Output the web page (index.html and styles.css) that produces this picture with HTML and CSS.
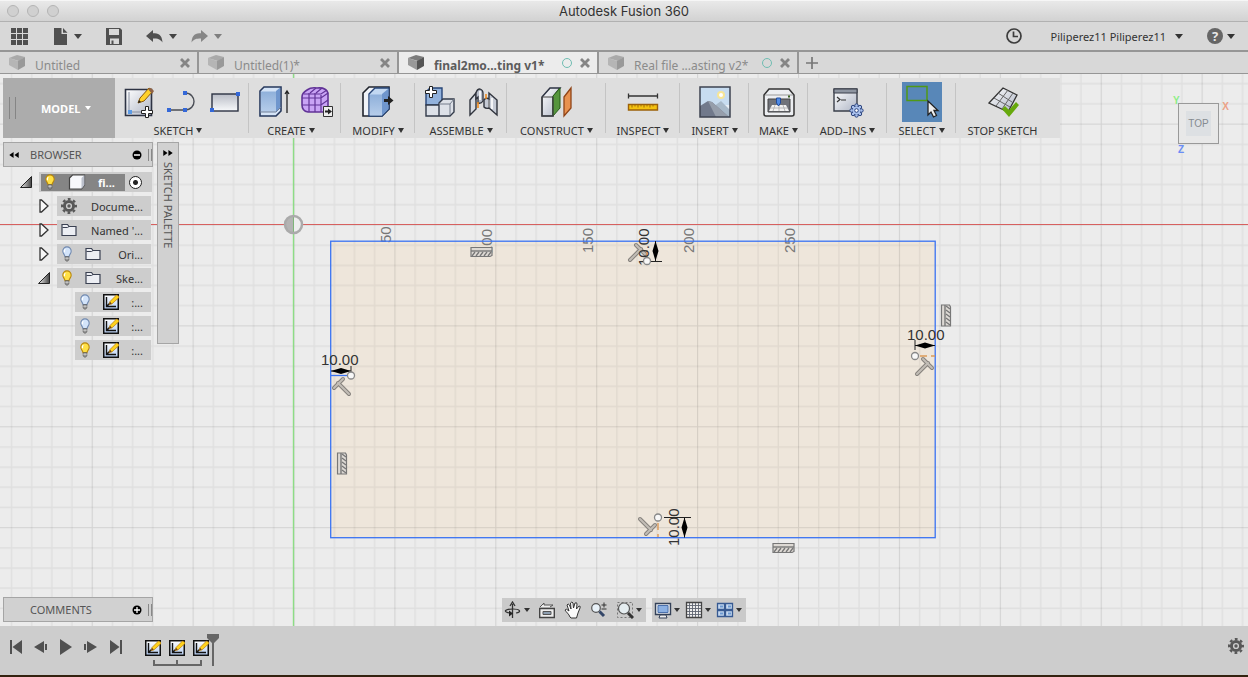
FILE: index.html
```html
<!DOCTYPE html>
<html lang="en">
<head>
  <meta charset="UTF-8" />
  <meta name="viewport" content="width=device-width, initial-scale=1.0"/>
  <title>Autodesk Fusion 360</title>
  <link rel="stylesheet" href="styles.css">
</head>
<body>
  <svg class="defs" aria-hidden="true">
    <defs>
      <linearGradient id="metal" x1="0" y1="0" x2="0" y2="1"><stop offset="0" stop-color="#b9bdc6"/><stop offset="1" stop-color="#f8f9fb"/></linearGradient>
      <linearGradient id="paper" x1="0" y1="0" x2="1" y2="1"><stop offset="0" stop-color="#fff"/><stop offset="1" stop-color="#aeb5c5"/></linearGradient>
      <linearGradient id="blue" x1="0" y1="0" x2="0" y2="1"><stop offset="0" stop-color="#8fb0da"/><stop offset="1" stop-color="#b6cdea"/></linearGradient>
      <linearGradient id="sheet" x1="0" y1="0" x2="0" y2="1"><stop offset="0" stop-color="#fff"/><stop offset="1" stop-color="#b5cdf2"/></linearGradient>
      <linearGradient id="fold" x1="0" y1="0" x2="1" y2="0"><stop offset="0" stop-color="#eee"/><stop offset="1" stop-color="#444"/></linearGradient>
    </defs>
    <symbol id="i-cube" viewBox="0 0 18 18">
      <path d="M1 4 9 1l8 2-6 4z" opacity=".75"/><path d="M1 4l9 3v9l-9-5z" opacity=".55"/><path d="M10 7l7-4v9l-7 4z"/>
    </symbol>
    <symbol id="i-close" viewBox="0 0 10 10"><path d="M1 1l8 8M9 1L1 9" stroke="#858585" stroke-width="2.8"/></symbol>
    <symbol id="i-bulb" viewBox="0 0 12 18">
      <path d="M6 1a4.700 4.700 0 0 0-4.700 4.800C1.300 8.500 3.500 9.500 3.700 12h4.600c.2-2.500 2.400-3.500 2.400-6.200A4.700 4.700 0 0 0 6 1z" stroke-width="1.200"/>
      <path d="M4 3.500q-1.500 1.500-.8 3.500" fill="none" stroke="#fff" stroke-width="1.400"/>
      <path d="M4 12h4v3.500L6.800 17H5.200L4 15.500z" fill="#999" stroke="#555" stroke-width=".8"/><path d="M4 13.700h4" stroke="#eee" stroke-width=".8"/>
    </symbol>
    <symbol id="i-folder" viewBox="0 0 16 14">
      <path d="M1 12.500V1.500h5.500l1.500 2h7v9z" fill="#eceef3" stroke="#3b4152" stroke-width="1.200"/><path d="M1.500 4.500h5L8 3.500" fill="none" stroke="#3b4152"/>
    </symbol>
    <symbol id="i-sketch" viewBox="0 0 16 16">
      <rect x=".75" y=".75" width="14.500" height="14.500" fill="url(#sheet)" stroke="#111" stroke-width="1.500"/>
      <path d="M3.500 3v9.500H13M3.500 12.500l3-3" fill="none" stroke="#111" stroke-width="1.400"/>
      <path d="M6 10.500l1-3L13.500 1 16 2.500v1L8.800 10z" fill="#ffd21c" stroke="#b57708" stroke-width=".7"/><path d="M6 10.500l1-2.800 1.800 2z" fill="#6a421d"/>
    </symbol>
    <symbol id="i-gear" viewBox="0 0 16 16">
      <circle cx="8" cy="8" r="4.600" fill="none" stroke="#585858" stroke-width="3"/>
      <circle cx="8" cy="8" r="6.900" fill="none" stroke="#585858" stroke-width="2.200" stroke-dasharray="2.800 2.620" stroke-dashoffset="1.400"/>
      <circle cx="8" cy="8" r="1.700" fill="#585858"/>
    </symbol>
    <symbol id="i-closed" viewBox="0 0 10 14"><path d="M1 1h1.500L9 7l-6.500 6H1z" fill="#f7f7f7" stroke="#333" stroke-width="1.300"/></symbol>
    <symbol id="i-open" viewBox="0 0 12 12"><path d="M11.500.5v11H.5z" fill="url(#fold)" stroke="#222"/></symbol>
    <symbol id="i-perp" viewBox="-12 -12 24 24">
      <g fill="none" stroke-linecap="round"><path d="M-7 7L4-4M-1-8L8 1" stroke="#85817c" stroke-width="4"/><path d="M-7 7L4-4M-1-8L8 1" stroke="#c2bdb6" stroke-width="2"/></g>
    </symbol>
    <symbol id="i-level" viewBox="0 0 24 12">
      <path d="M1 1.500h21v8l-2 1H1z" fill="#ddd9d4" stroke="#777" stroke-width="1.200"/><path d="M1 5h21" stroke="#777" stroke-width="1.400"/>
      <path d="M2 10l3-4M6 10l3-4M10 10l3-4M14 10l3-4M18 10l3-4" stroke="#777" stroke-width="1.300"/>
    </symbol>
  </svg>

  <header class="titlebar">
    <div class="lights"><button aria-label="Close window"></button><button aria-label="Minimize"></button><button aria-label="Zoom"></button></div>
    <h1>Autodesk Fusion 360</h1>
  </header>

  <div class="appbar">
    <div class="quick">
      <button class="quick-grid" aria-label="Data panel"><svg width="17" height="17" viewBox="0 0 17 17"><path d="M0 0h5v5H0zM6 0h5v5H6zM12 0h5v5h-5zM0 6h5v5H0zM6 6h5v5H6zM12 6h5v5h-5zM0 12h5v5H0zM6 12h5v5H6zM12 12h5v5h-5z"/></svg></button>
      <button class="quick-file" aria-label="File"><svg width="14" height="17" viewBox="0 0 14 17"><path d="M0 0h7.500v6H13v11H0zM9 0l4.500 4.800H9z"/></svg><span class="caret"></span></button>
      <button class="quick-save" aria-label="Save"><svg width="16" height="17" viewBox="0 0 16 17"><path d="M0 0h14l2 2v15H0zM3 1v6h10V1zM4 10.500V16h9v-5.500z" fill-rule="evenodd"/><path d="M5.500 12.500h2V16h-2z"/></svg></button>
      <button class="quick-undo" aria-label="Undo"><svg width="17" height="13" viewBox="0 0 17 13"><path d="M0 6l7-6v3.300c5 0 9 1 9.500 9.200C14 9 12 8.500 7 8.500V12z"/></svg><span class="caret"></span></button>
      <button class="quick-redo" aria-label="Redo"><svg width="17" height="13" viewBox="0 0 17 13"><path d="M17 6l-7-6v3.300C5 3.300 1 4.300.5 12.500 3 9 5 8.500 10 8.500V12z"/></svg><span class="caret"></span></button>
    </div>
    <div class="account">
      <button aria-label="Job status"><svg width="16" height="16" viewBox="0 0 16 16"><circle cx="8" cy="8" r="7" fill="none" stroke="#3d3d3d" stroke-width="1.700"/><path d="M7.500 3.500V8.500H12" fill="none" stroke="#3d3d3d" stroke-width="1.700"/></svg></button>
      <button class="user">Piliperez11 Piliperez11<span class="caret"></span></button>
      <button aria-label="Help"><span class="help">?</span><span class="caret"></span></button>
    </div>
  </div>

  <nav class="tabs">
    <div class="tab"><svg class="cube"><use href="#i-cube"/></svg><a href="#untitled">Untitled</a><button aria-label="Close tab"><svg width="10" height="10"><use href="#i-close"/></svg></button></div>
    <div class="tab"><svg class="cube"><use href="#i-cube"/></svg><a href="#untitled1">Untitled(1)*</a><button aria-label="Close tab"><svg width="10" height="10"><use href="#i-close"/></svg></button></div>
    <div class="tab active"><svg class="cube"><use href="#i-cube"/></svg><a href="#final">final2mo...ting v1*</a><span class="sync"></span><button aria-label="Close tab"><svg width="10" height="10"><use href="#i-close"/></svg></button></div>
    <div class="tab"><svg class="cube"><use href="#i-cube"/></svg><a href="#real">Real file ...asting v2*</a><span class="sync"></span><button aria-label="Close tab"><svg width="10" height="10"><use href="#i-close"/></svg></button></div>
    <button class="new-tab" aria-label="New tab"><svg width="12" height="12" viewBox="0 0 12 12"><path d="M6 0v12M0 6h12" stroke="#777" stroke-width="1.700"/></svg></button>
  </nav>

  <main class="viewport">
    <svg class="drawing" role="img" aria-label="Sketch plane">
      <defs>
        <pattern id="grid" x="293.500" y="150.500" width="100.900" height="100.900" patternUnits="userSpaceOnUse">
          <path d="M20.700 0v101M40.900 0v101M61 0v101M81.200 0v101M0 20.700h101M0 40.900h101M0 61h101M0 81.200h101" stroke="#000" stroke-opacity=".055" stroke-width="1.400"/>
          <path d="M.5 0v101M0 .5h101" stroke="#000" stroke-opacity=".11" stroke-width="1.100"/>
        </pattern>
      </defs>
      <rect x="331" y="167" width="604" height="297" fill="#eee6db"/>
      <rect width="100%" height="100%" fill="url(#grid)"/>
      <!-- axes and origin -->
      <path d="M0 150.500h4000" stroke="#d7605f"/>
      <path d="M293.500 0v2000" stroke="#8ddd85" stroke-width="1.400"/>
      <circle cx="293.500" cy="150.500" r="8.500" fill="#eee"/>
      <path d="M293.500 150.500v-8.500a8.500 8.500 0 0 0-8.500 8.500zM293.500 150.500h-8.500a8.500 8.500 0 0 0 8.500 8.500z" fill="#b4b4b4"/>
      <path d="M293.500 142v17" stroke="#7fb579"/>
      <circle cx="293.500" cy="150.500" r="8.500" fill="none" stroke="#aaa" stroke-width="2.500"/>
      <g class="ruler">
        <text transform="translate(391 169) rotate(-90)">50</text>
        <text transform="translate(492 180) rotate(-90)">100</text>
        <text transform="translate(593 179) rotate(-90)">150</text>
        <text transform="translate(694 179) rotate(-90)">200</text>
        <text transform="translate(795 179) rotate(-90)">250</text>
      </g>
      <rect x="330.700" y="167.200" width="604.500" height="296.500" fill="none" stroke="#3a73f2" stroke-width="1.300"/>
      <!-- constraint glyphs -->
      <use href="#i-level" x="470" y="172" width="24" height="12"/>
      <use href="#i-level" x="772" y="468" width="24" height="12"/>
      <use href="#i-level" width="24" height="12" transform="translate(940 253) rotate(-90)"/>
      <use href="#i-level" width="24" height="12" transform="translate(336 401) rotate(-90)"/>
      <use href="#i-perp" x="625" y="167" width="24" height="24"/>
      <use href="#i-perp" x="912" y="281" width="24" height="24"/>
      <use href="#i-perp" width="24" height="24" transform="translate(342 313) rotate(-90) translate(-12 -12)"/>
      <use href="#i-perp" width="24" height="24" transform="translate(647 452) rotate(90) translate(-12 -12)"/>
      <!-- dimensions -->
      <path d="M658 449v14M920 282h15M647 176v12" stroke="#dc9a58" stroke-width="1.400" stroke-dasharray="7 4" fill="none"/>
      <path d="M331 301.500h16" stroke="#3a73f2" stroke-width="1.300"/>
      <g class="dimension">
        <path d="M331 297h20M351 292v10M915 271.500h20M915 266v10M655.500 167v20M649 187.500h13M684.500 443.500v20M664 443.500h27"/>
        <path class="tip" d="M331 297l10-3 10 3-10 3zM915 271.500l10-3 10 3-10 3zM655.500 167l3 10-3 10-3-10zM684.500 443.500l3 10-3 10-3-10z"/>
        <text x="321" y="291">10.00</text>
        <text x="907" y="266">10.00</text>
        <text transform="translate(649 192) rotate(-90)">10.00</text>
        <text transform="translate(679 472) rotate(-90)">10.00</text>
      </g>
      <g fill="#f8f8f8" stroke="#888" stroke-width="1.300"><circle cx="351" cy="301.500" r="3.500"/><circle cx="915" cy="282" r="3.500"/><circle cx="647" cy="187" r="3.500"/><circle cx="658" cy="443.500" r="3.500"/></g>
    </svg>

    <div class="ribbon">
      <button class="workspace">MODEL<span class="caret"></span></button>
      <section class="group wide">
        <div class="tools">
          <button aria-label="Create sketch"><svg viewBox="0 0 32 32"><path d="M2.500 3.500h26v26h-26z" fill="url(#paper)" stroke="#2d3343" stroke-width="1.600"/><path d="M6 6v20h15" fill="none" stroke="#8990a0"/><path d="M15 17l2-5L26 2l4 3-9 10z" fill="#ffd12b" stroke="#8a5a10"/><path d="M25 3l3-1 3 3-2 3z" fill="#8f6245"/><path d="M15 17l1-3 2 2z" fill="#222"/><path d="M5 24h4v4H5z" fill="#5c9be6"/><path d="M22.500 20.500h3v4h4v3h-4v4h-3v-4h-4v-3h4z" fill="#fff" stroke="#222"/></svg></button>
          <button aria-label="Line"><svg viewBox="0 0 32 32"><path d="M3 24h16c12 0 12-17 0-17" fill="none" stroke="#4a4d55" stroke-width="1.400"/><path d="M1 22h4v4H1zM17 22h4v4h-4zM17 5h4v4h-4z" fill="#3468d8"/></svg></button>
          <button aria-label="Rectangle"><svg viewBox="0 0 32 32"><rect x="3" y="8" width="26" height="17" fill="url(#metal)" stroke="#2d3343" stroke-width="1.400"/><path d="M1 22h4v4H1zM27 6h4v4h-4z" fill="#3468d8"/></svg></button>
        </div>
        <button class="label">SKETCH<span class="caret"></span></button>
      </section>
      <section class="group wide">
        <div class="tools">
          <button aria-label="Extrude"><svg viewBox="0 0 32 32"><path d="M2 5l4-4h17v24l-5 5H2z" fill="#d5e4f7" stroke="#26385c" stroke-width="1.600"/><path d="M2.800 5.500H18V26H2.800z" fill="url(#blue)"/><path d="M18 5l4.200-3.500v20L18 26z" fill="#6f96cd"/><path d="M2 26h16l5-5" fill="none" stroke="#728097"/><path d="M29 27V5m-2 3l2-3 2 3" fill="none" stroke="#222" stroke-width="1.300"/></svg></button>
          <button aria-label="Create form"><svg viewBox="0 0 32 32"><path d="M1 11Q1 7 6 4q4-3 10-2 9-1 11 5v14q-1 4-5 5H7q-6-1-6-7z" fill="#c9a4f5" stroke="#613397" stroke-width="1.600"/><path d="M1 12h19l7-5M1 19h19l7-5M8 7v19M14 7v19M20 9v17M3 8h17l6-4M9 7l6-5M15 7l6-5" fill="none" stroke="#613397" stroke-width="1.200"/><path d="M22.500 20.500h9v10h-9z" fill="#eee" stroke="#333"/><path d="M24 24.500h3v-2l4 3-4 3v-2h-3z" fill="#222"/></svg></button>
        </div>
        <button class="label">CREATE<span class="caret"></span></button>
      </section>
      <section class="group">
        <div class="tools">
          <button aria-label="Press pull"><svg viewBox="0 0 32 32"><path d="M1 7l6-6h20v22l-7 7H1z" fill="#f0f3f8" stroke="#20242c" stroke-width="1.600"/><path d="M7 8l6-6h14v21l-7 7H7z" fill="#c2d8f2" stroke="#274577" stroke-width="1.400"/><path d="M7.700 8.500H20v21H7.700z" fill="url(#blue)"/><path d="M20 8l6.300-5.200V23L20 29.500z" fill="#6f96cd"/><path d="M22 13h4v-3l5.500 4.500L26 19v-3h-4z" fill="#222"/></svg></button>
        </div>
        <button class="label">MODIFY<span class="caret"></span></button>
      </section>
      <section class="group">
        <div class="tools">
          <button aria-label="New component"><svg viewBox="0 0 32 32"><path d="M2 6l4-4h12v14l-3 3H2z" fill="#92b2dc" stroke="#274577" stroke-width="1.400"/><path d="M2 19h13v11H2zM15 17l4-4h11v13l-4 4H15z" fill="#dde1e8" stroke="#333b4a" stroke-width="1.400"/><path d="M15 18h11v11M26 18l4-5" fill="none" stroke="#747d8b"/><path d="M5.500.5h3v4h4v3h-4v4h-3v-4h-4v-3h4z" fill="#fff" stroke="#222"/></svg></button>
          <button aria-label="Joint"><svg viewBox="0 0 32 32"><path d="M3 14l6-7v16l-6 6z" fill="#d7dbe2" stroke="#30343d" stroke-width="1.400"/><path d="M9 7q1-4 4-4 3 1 3 4v8q-2 3-5 2v-6l-2 2z" fill="#b7bdc9" stroke="#30343d" stroke-width="1.300"/><path d="M17 14q2-3 5-1V7l8 7v15l-8-7q-3 1-5-1z" fill="#c5cad4" stroke="#30343d" stroke-width="1.400"/><path d="M13 5v9M25 12v11" stroke="#f4f5f7" stroke-width="2"/><path d="M22 13v9" stroke="#555"/><path d="M11 16v6M19 8v5" stroke="#f18816" stroke-width="1.500"/></svg></button>
        </div>
        <button class="label">ASSEMBLE<span class="caret"></span></button>
      </section>
      <section class="group">
        <div class="tools">
          <button aria-label="Offset plane"><svg viewBox="0 0 32 32"><path d="M1 11L9 2h10l-7 9v19H1z" fill="url(#paper)" stroke="#2d3343" stroke-width="1.500"/><path d="M12 10l7-8v20l-7 8z" fill="#55953d" stroke="#275d18"/><path d="M1 11h11M1 11v19h11V11" fill="none" stroke="#444" stroke-width="1.200"/><path d="M23 11l7-9v20l-7 8z" fill="#e89250" stroke="#904417" stroke-width="1.300"/></svg></button>
        </div>
        <button class="label">CONSTRUCT<span class="caret"></span></button>
      </section>
      <section class="group">
        <div class="tools">
          <button aria-label="Measure"><svg viewBox="0 0 32 32"><path d="M1.500 10h29M1.500 7.500v5M30.500 7.500v5" fill="none" stroke="#333" stroke-width="1.300"/><path d="M1.500 18.500h29V24h-29z" fill="#f4c20f" stroke="#9c610a" stroke-width="1.400"/><path d="M5 19v2.500M8 19v1.500M11 19v2.500M14 19v1.500M17 19v2.500M20 19v1.500M23 19v2.500M26 19v1.500" stroke="#a06c08"/></svg></button>
        </div>
        <button class="label">INSPECT<span class="caret"></span></button>
      </section>
      <section class="group">
        <div class="tools">
          <button aria-label="Insert image"><svg viewBox="0 0 32 32"><path d="M1 1h30v30H1z" fill="#c7dcf0"/><path d="M1 19h30v12H1z" fill="#e8eff6"/><circle cx="22" cy="9" r="3" fill="#fff" stroke="#f7e596" stroke-width="2"/><path d="M14 21l8-6 9 9v7H15z" fill="#a7b8c8"/><path d="M1 20l8-5 4 1 17 15H1z" fill="#71798b"/><path d="M9 15l4 1 17 15H17z" fill="#969eab"/><path d="M1 1h30v30H1z" fill="none" stroke="#3e4350" stroke-width="1.500"/></svg></button>
        </div>
        <button class="label">INSERT<span class="caret"></span></button>
      </section>
      <section class="group">
        <div class="tools">
          <button aria-label="3D print"><svg viewBox="0 0 32 32"><path d="M1 9l5-6h20l5 6v19q0 2-2 2H3q-2 0-2-2z" fill="#eceef1" stroke="#333" stroke-width="1.500"/><path d="M2 9h28" stroke="#999"/><path d="M5 13h22v13H5z" fill="#70737a" stroke="#444"/><path d="M9 19h14l3 6H6z" fill="#f2f2f2"/><path d="M7 22h18M12 19l-2 6M16 19v6M20 19l2 6" stroke="#aaa" stroke-width=".8"/><path d="M13.500 12h4v5l-2 3-2-3z" fill="#4e8ae4" stroke="#224c9c"/><path d="M25 9.500h2v2h-2z" fill="#395e22"/></svg></button>
        </div>
        <button class="label">MAKE<span class="caret"></span></button>
      </section>
      <section class="group">
        <div class="tools">
          <button aria-label="Scripts and add-ins"><svg viewBox="0 0 32 32"><path d="M2 3h23v22H2z" fill="url(#paper)" stroke="#3a3f4a" stroke-width="1.400"/><path d="M2 3h23v4H2z" fill="#8e95a1" stroke="#3a3f4a"/><path d="M5 11l3 2.500L5 16M9 14h5" fill="none" stroke="#333" stroke-width="1.200"/><g transform="translate(24.500 24.500)" fill="#a9c0eb" stroke="#2e4680"><circle r="5"/><circle cx="0" cy="-5" r="1.700"/><circle cx="0" cy="5" r="1.700"/><circle cx="5" cy="0" r="1.700"/><circle cx="-5" cy="0" r="1.700"/><circle cx="3.500" cy="-3.500" r="1.700"/><circle cx="-3.500" cy="3.500" r="1.700"/><circle cx="3.500" cy="3.500" r="1.700"/><circle cx="-3.500" cy="-3.500" r="1.700"/><circle r="4" stroke="none"/><circle r="1.800" fill="#fff"/></g></svg></button>
        </div>
        <button class="label">ADD–INS<span class="caret"></span></button>
      </section>
      <section class="group">
        <div class="tools">
          <button class="selected" aria-label="Select"><svg viewBox="0 0 40 40"><path d="M5 4.500h20v14H5z" fill="none" stroke="#509916" stroke-width="1.500"/><path d="M26 19v14l3-3 2.500 5 3-1.500-2.500-5h4z" fill="#eee" stroke="#222" stroke-width="1.300"/></svg></button>
        </div>
        <button class="label">SELECT<span class="caret"></span></button>
      </section>
      <section class="group">
        <div class="tools">
          <button aria-label="Stop sketch"><svg viewBox="0 0 32 32"><path d="M2 17L16 2l14 7-9 17z" fill="url(#paper)" stroke="#333" stroke-width="1.300"/><path d="M11 7l14 9M7 12l16 9M21 4L9 20M26 7L15 23" fill="none" stroke="#666"/><path d="M15 23l3-3 4 4 7-8 3 3-10 12z" fill="#67a90c"/></svg></button>
        </div>
        <button class="label">STOP SKETCH</button>
      </section>
    </div>

    <div class="panels">
      <aside class="browser">
        <div class="panel-head">
          <button aria-label="Collapse"><svg width="10" height="6" viewBox="0 0 11 7"><path d="M5 0v7L0 3.500zM11 0v7L6 3.500z"/></svg></button>
          <h2>BROWSER</h2>
          <button aria-label="Hide browser"><svg width="10" height="10" viewBox="0 0 10 10"><circle cx="5" cy="5" r="4.500"/><path d="M2 5h6" stroke="#fff" stroke-width="1.500"/></svg></button>
          <span class="grip"></span>
        </div>
        <ul class="tree">
          <li class="root"><button aria-label="Collapse"><svg width="12" height="12"><use href="#i-open"/></svg></button><div class="node"><div class="hot"><svg class="bulb on"><use href="#i-bulb"/></svg><svg width="18" height="16" viewBox="0 0 18 16"><path d="M1.500 4l3-3h12v10l-3 4h-12z" fill="#f7f8fb" stroke="#444" stroke-width="1.200"/><path d="M13.500 4l3-3v10l-3 4z" fill="#bbc0cb"/></svg><span>fi...</span></div><input type="radio" name="component" aria-label="Activate component" checked></div></li>
          <li class="child"><button aria-label="Expand"><svg width="10" height="14"><use href="#i-closed"/></svg></button><div class="node"><svg width="16" height="16"><use href="#i-gear"/></svg><span>Docume...</span></div></li>
          <li class="child"><button aria-label="Expand"><svg width="10" height="14"><use href="#i-closed"/></svg></button><div class="node"><svg width="16" height="14"><use href="#i-folder"/></svg><span>Named '...</span></div></li>
          <li class="child"><button aria-label="Expand"><svg width="10" height="14"><use href="#i-closed"/></svg></button><div class="node"><svg class="bulb"><use href="#i-bulb"/></svg><svg width="16" height="14"><use href="#i-folder"/></svg><span>Ori...</span></div></li>
          <li class="child"><button aria-label="Collapse"><svg width="12" height="12"><use href="#i-open"/></svg></button><div class="node"><svg class="bulb on"><use href="#i-bulb"/></svg><svg width="16" height="14"><use href="#i-folder"/></svg><span>Ske...</span></div></li>
          <li class="leaf"><div class="node"><svg class="bulb"><use href="#i-bulb"/></svg><svg width="16" height="16"><use href="#i-sketch"/></svg><span>:...</span></div></li>
          <li class="leaf"><div class="node"><svg class="bulb"><use href="#i-bulb"/></svg><svg width="16" height="16"><use href="#i-sketch"/></svg><span>:...</span></div></li>
          <li class="leaf"><div class="node"><svg class="bulb on"><use href="#i-bulb"/></svg><svg width="16" height="16"><use href="#i-sketch"/></svg><span>:...</span></div></li>
        </ul>
      </aside>
      <button class="palette"><svg width="10" height="6" viewBox="0 0 11 7"><path d="M0 0v7l5-3.500zM6 0v7l5-3.500z"/></svg><span>SKETCH PALETTE</span></button>
    </div>

    <div class="bottom">
      <div class="panel-head comments">
        <h2>COMMENTS</h2>
        <button aria-label="Show comments"><svg width="10" height="10" viewBox="0 0 10 10"><circle cx="5" cy="5" r="4.500"/><path d="M2 5h6M5 2v6" stroke="#fff" stroke-width="1.300"/></svg></button>
        <span class="grip"></span>
      </div>
      <div class="navbar">
        <div class="nav-set">
          <button aria-label="Orbit"><svg width="18" height="18" viewBox="0 0 18 18"><path d="M8.500 17V3M6 5l2.500-4L11 5" fill="none" stroke="#333" stroke-width="1.300"/><path d="M12 12c6-1 4-4-3-4-9 0-10 3-3 4" fill="none" stroke="#333" stroke-width="1.200"/><path d="M5 9.500l4 3-4 3z" fill="#222"/></svg><span class="caret"></span></button>
          <button aria-label="Look at"><svg width="18" height="18" viewBox="0 0 18 18"><path d="M2 6l4-4v2h9l-3 2" fill="#eee" stroke="#555"/><path d="M1.700 7.500h14.600v9H1.700z" fill="#eee" stroke="#444" stroke-width="1.400"/><path d="M5 10.500h8v3H5z" fill="#8d9eb0" stroke="#555"/></svg></button>
          <button aria-label="Pan"><svg width="18" height="18" viewBox="0 0 18 18"><path d="M6 16C5 13 2 11 1 9q1-2 4 1L3 4q1-2 2.500 0L7 8 6.500 2Q8 0 9 2l.5 5L11 2q2-1 2 1l-.5 5L15 5q2 0 1 2l-2 5-1.500 5H7z" fill="#fafafa" stroke="#333"/></svg></button>
          <button aria-label="Zoom"><svg width="18" height="18" viewBox="0 0 18 18"><circle cx="6" cy="7" r="4.300" fill="#e8f1f8" stroke="#555" stroke-width="1.200"/><path d="M9.500 10.500L14 15" stroke="#334668" stroke-width="3"/><path d="M11.500 4h5M14 1.500v5M11.500 8h5" stroke="#333"/></svg></button>
          <button aria-label="Fit"><svg width="18" height="18" viewBox="0 0 18 18"><path d="M1.500 1.500h15v15h-15z" fill="none" stroke="#777" stroke-dasharray="2 2"/><circle cx="8" cy="7.500" r="5.500" fill="#e5edf0" stroke="#555" stroke-width="1.200"/><path d="M12 12l5 5" stroke="#333" stroke-width="3"/></svg><span class="caret"></span></button>
        </div>
        <div class="nav-set">
          <button aria-label="Display settings"><svg width="18" height="18" viewBox="0 0 18 18"><path d="M1.500 2.500h15v11h-15z" fill="#e7ebf1" stroke="#344158" stroke-width="1.400"/><path d="M4 4.500h10v7H4z" fill="#8bb0e3" stroke="#4b70ac"/><path d="M6 14h6l1 3H5z" fill="#eee" stroke="#344158"/></svg><span class="caret"></span></button>
          <button aria-label="Grid and snaps"><svg width="18" height="18" viewBox="0 0 18 18"><path d="M1.500 1.500h15v15h-15z" fill="#f0f0f0" stroke="#444" stroke-width="1.300"/><path d="M4.500 2v14M7.500 2v14M10.500 2v14M13.500 2v14M2 4.500h14M2 7.500h14M2 10.500h14M2 13.500h14" stroke="#5f6470" stroke-width=".9"/></svg><span class="caret"></span></button>
          <button aria-label="Viewports"><svg width="18" height="18" viewBox="0 0 18 18"><path d="M1.500 2.500h7v6h-7zM9.500 2.500h7v6h-7zM1.500 9.500h7v6h-7zM9.500 9.500h7v6h-7z" fill="#c5d8ef" stroke="#375a92" stroke-width="1.300"/><path d="M4 4.500h3v2H4zM12 4.500h3v2h-3zM4 11.500h3v2H4zM12 11.500h3v2h-3z" fill="#6e9ad2"/></svg><span class="caret"></span></button>
        </div>
      </div>
    </div>

    <div class="viewcube"><span class="axis axis-y">Y</span><span class="axis axis-x">X</span><span class="axis axis-z">Z</span><button>TOP</button></div>
  </main>

  <footer class="timeline">
    <div class="playback">
      <button aria-label="Go to start"><svg width="14" height="16" viewBox="0 0 14 16"><path d="M1 1h2v14H1zM13 1v14L3.500 8z"/></svg></button>
      <button aria-label="Step back"><svg width="14" height="16" viewBox="0 0 14 16"><path d="M10 2v12L0 8zM11 5h2v6h-2z"/></svg></button>
      <button aria-label="Play"><svg width="14" height="16" viewBox="0 0 14 16"><path d="M1 0l12 8-12 8z"/></svg></button>
      <button aria-label="Step forward"><svg width="14" height="16" viewBox="0 0 14 16"><path d="M3 2v12l10-6zM0 5h2v6H0z"/></svg></button>
      <button aria-label="Go to end"><svg width="14" height="16" viewBox="0 0 14 16"><path d="M11 1h2v14h-2zM1 1v14l9.500-7z"/></svg></button>
    </div>
    <div class="history">
      <div class="features">
        <button aria-label="Sketch 1"><svg width="16" height="16"><use href="#i-sketch"/></svg></button>
        <button aria-label="Sketch 2"><svg width="16" height="16"><use href="#i-sketch"/></svg></button>
        <button aria-label="Sketch 3"><svg width="16" height="16"><use href="#i-sketch"/></svg></button>
      </div>
      <svg width="64" height="7" viewBox="0 0 64 7"><path d="M9 0v5h47V0M32 0v5" fill="none" stroke="#666" stroke-width="2"/></svg>
      <svg class="marker" width="12" height="32" viewBox="0 0 12 32"><path d="M0 0h12v4L7 9v23H5V9L0 4z"/></svg>
    </div>
    <button class="settings" aria-label="Timeline settings"><svg width="16" height="16"><use href="#i-gear"/></svg></button>
  </footer>
</body>
</html>
```

FILE: styles.css
```css
* {
  box-sizing: border-box;
}
body {
  margin: 0;
  height: 100vh;
  display: flex;
  flex-direction: column;
  overflow: hidden;
  font-family: "Noto Sans", "Open Sans", sans-serif;
  font-size: 12px;
  color: #333;
  background: #ececec;
}
button {
  display: flex;
  align-items: center;
  justify-content: center;
  margin: 0;
  padding: 0;
  border: none;
  background: none;
  font: inherit;
  color: inherit;
  cursor: pointer;
}
svg {
  display: block;
  flex: none;
}
h1, h2 {
  margin: 0;
  font-weight: 400;
}
.defs {
  position: absolute;
  width: 0;
  height: 0;
}
.caret {
  flex: none;
  border: solid transparent;
  border-width: 5px 4px 0;
  border-top-color: currentColor;
}

/* window chrome */
.titlebar {
  flex: none;
  display: grid;
  grid-template-columns: 1fr auto 1fr;
  align-items: center;
  height: 22px;
  padding: 0 7px;
  border-top: 1px solid #f6f6f6;
  border-bottom: 1px solid #b1b1b1;
  background: linear-gradient(#e9e9e9, #d2d2d2);
}
.titlebar h1 {
  font-family: Inter, sans-serif;
  font-size: 13px;
}
.lights {
  display: flex;
  gap: 8px;
}
.lights button {
  width: 12px;
  height: 12px;
  border: 1px solid #b4b4b4;
  border-radius: 50%;
  background: #d0d0d0;
}
.appbar {
  flex: none;
  display: flex;
  justify-content: space-between;
  align-items: center;
  height: 30px;
  padding: 0 13px 0 11px;
  border-bottom: 2px solid #969696;
  background: #d8d8d8;
}
.quick {
  display: flex;
  align-items: center;
  color: #444;
  fill: #505050;
}
.quick button {
  gap: 6px;
}
.quick-file {
  margin-left: 26px;
}
.quick-save, .quick-undo {
  margin-left: 24px;
}
.quick-redo {
  margin-left: 14px;
  opacity: .6;
}
.account {
  display: flex;
  align-items: center;
  gap: 24px;
}
.account button {
  gap: 4px;
}
.account .user {
  gap: 9px;
  padding-left: 5px;
  font-size: 11px;
}
.help {
  width: 16px;
  height: 16px;
  border-radius: 50%;
  background: #666;
  color: #e8e8e8;
  font-size: 13px;
  font-weight: 700;
  line-height: 16px;
}

/* document tabs */
.tabs {
  flex: none;
  display: flex;
  height: 22px;
  border-bottom: 1px solid #969696;
  background: #d8d8d8;
}
.tab {
  flex: 0 1 200px;
  display: flex;
  align-items: center;
  padding: 0 7px 0 8px;
  border-right: 2px solid #969696;
  color: #8b8b8b;
  fill: #999;
}
.tab:first-child {
  flex-basis: 199px;
}
.tab a {
  flex: 1;
  padding: 5px 0 0 9px;
  color: inherit;
  text-decoration: none;
  white-space: nowrap;
}
.tab.active {
  background: #ececec;
  color: #5c5c5c;
  fill: #555;
  font-weight: 700;
}
.cube {
  width: 18px;
  height: 18px;
}
.sync {
  width: 10px;
  height: 10px;
  margin-right: 8px;
  border: 1px solid #6fbdb2;
  border-radius: 50%;
}
.new-tab {
  width: 26px;
}

/* canvas */
.viewport {
  position: relative;
  flex: 1;
  display: flex;
  flex-direction: column;
  padding: 4px 3px;
  min-height: 0;
}
.drawing {
  position: absolute;
  top: 0;
  left: 0;
  width: 100%;
  height: 100%;
}
.drawing text {
  font-family: "Liberation Sans", sans-serif;
  font-size: 15px;
}
.ruler {
  fill: #777;
}
.dimension {
  fill: #333;
}
.dimension path {
  fill: none;
  stroke: #222;
}
.dimension .tip {
  fill: #000;
  stroke: none;
}

/* ribbon */
.ribbon {
  position: relative;
  align-self: flex-start;
  display: grid;
  grid-template-columns: 112px 134px 92px 74px 92px 99px 74px 69px 59px 79px 69px 104px;
  height: 60px;
  background: #dedede;
}
.workspace {
  justify-content: flex-start;
  gap: 5px;
  padding-left: 6px;
  background: #acacac;
  color: #fff;
  font-size: 11px;
  font-weight: 700;
}
.workspace::before {
  content: "";
  width: 5px;
  height: 22px;
  margin-right: 20px;
  border: solid #858585;
  border-width: 0 1px;
}
.workspace .caret {
  border-width: 4px 3px 0;
}
.group {
  display: flex;
  flex-direction: column;
  align-items: center;
  padding-top: 4px;
  background: linear-gradient(#c4c4c4, #c4c4c4) right 5px / 1px 50px no-repeat;
}
.group:last-child {
  background: none;
  padding-right: 11px;
}
.tools {
  display: flex;
  align-items: center;
  gap: 11px;
  height: 40px;
}
.tools svg {
  width: 32px;
  height: 32px;
}
.tools .selected {
  background: #5887b8;
}
.tools .selected svg {
  width: 40px;
  height: 40px;
}
.label {
  gap: 3px;
  height: 16px;
  font-size: 11px;
  white-space: nowrap;
}
.label .caret {
  border-width: 5px 3px 0;
}
.wide .label {
  padding-right: 8px;
}

/* side panels */
.panels {
  position: relative;
  flex: 1;
  display: flex;
  align-items: flex-start;
  gap: 4px;
  padding-top: 4px;
}
.browser, .comments {
  width: 150px;
}
.panel-head {
  display: flex;
  align-items: center;
  height: 25px;
  padding-left: 5px;
  border: 1px solid #a5a5a5;
  background: #d1d1d1;
}
.panel-head h2 {
  flex: 1;
  padding-left: 11px;
  font-size: 11px;
  color: #555;
}
.grip {
  width: 4px;
  height: 12px;
  margin-left: 6px;
  border: solid #888;
  border-width: 0 1px;
}
.tree {
  display: flex;
  flex-direction: column;
  gap: 4px;
  margin: 0;
  padding: 5px 0 0;
  list-style: none;
}
.tree li {
  display: flex;
  align-items: center;
  height: 20px;
}
.tree li > button {
  flex: none;
  width: 18px;
}
.root {
  padding-left: 14px;
}
.child {
  padding-left: 32px;
}
.leaf {
  padding-left: 72px;
}
.node {
  flex: 1;
  display: flex;
  align-items: center;
  gap: 12px;
  height: 20px;
  margin-right: 2px;
  padding: 0 8px 0 4px;
  background: #cdcdcd;
  font-size: 11px;
}
.root .node, .child .node {
  margin-left: 4px;
}
.node span {
  flex: 1;
  text-align: right;
  white-space: nowrap;
}
.root .node {
  gap: 4px;
  padding: 0 10px 0 2px;
}
.hot {
  flex: 1;
  display: flex;
  align-items: center;
  gap: 12px;
  height: 17px;
  padding: 0 10px 0 3px;
  background: #858585;
  color: #fff;
  font-weight: 700;
}
.node input {
  appearance: none;
  width: 13px;
  height: 13px;
  margin: 0;
  border: 1px solid #222;
  border-radius: 50%;
  background: radial-gradient(#222 2px, #fff 3px);
}
.bulb {
  width: 12px;
  height: 16px;
  fill: #d3e4fa;
  stroke: #7089b0;
}
.bulb.on {
  fill: #ffe044;
  stroke: #b8860b;
}
.palette {
  flex-direction: column;
  justify-content: flex-start;
  gap: 6px;
  width: 22px;
  height: 202px;
  padding-top: 7px;
  border: 1px solid #a5a5a5;
  background: #d1d1d1;
  font-size: 11px;
  color: #555;
}
.palette span {
  writing-mode: vertical-rl;
  white-space: nowrap;
}

/* bottom strip over the canvas */
.bottom {
  position: relative;
  display: grid;
  grid-template-columns: 1fr auto 1fr;
  align-items: end;
}
.comments {
  padding-left: 15px;
}
.navbar {
  display: flex;
  gap: 6px;
}
.nav-set {
  display: flex;
  align-items: center;
  gap: 8px;
  height: 24px;
  padding: 0 4px 0 2px;
  background: #cacaca;
}
.nav-set + .nav-set {
  gap: 5px;
}
.nav-set button {
  gap: 2px;
}
.nav-set .caret {
  border-width: 4px 3px 0;
}

/* view cube */
.viewcube {
  position: absolute;
  top: 29px;
  right: 29px;
  display: grid;
  place-items: center;
  width: 41px;
  height: 41px;
  border: 1px solid #999;
  background: #e8e8e8;
  font-family: "Liberation Sans Narrow", "Liberation Sans", sans-serif;
}
.viewcube button {
  width: 25px;
  height: 25px;
  background: #dde0e3;
  color: #858b90;
  font-size: 10px;
}
.axis {
  position: absolute;
  font-size: 10px;
  font-weight: 700;
  line-height: 10px;
}
.axis-y {
  top: -8px;
  left: -6px;
  color: #8cee86;
}
.axis-x {
  top: -2px;
  right: -11px;
  color: #eca186;
}
.axis-z {
  bottom: -12px;
  left: -1px;
  color: #6b8df5;
}

/* timeline */
.timeline {
  flex: none;
  display: flex;
  align-items: flex-start;
  height: 51px;
  padding: 8px 4px 0 9px;
  border-bottom: 2px solid #33220f;
  background: #cdcdcd;
  fill: #505050;
}
.playback {
  display: flex;
  gap: 11px;
  padding-top: 5px;
}
.history {
  position: relative;
  margin-left: 22px;
  padding-top: 6px;
}
.features {
  display: flex;
  gap: 8px;
  padding-bottom: 4px;
}
.marker {
  position: absolute;
  top: 0;
  right: -10px;
  fill: #666;
}
.settings {
  margin: 4px 0 0 auto;
}
```
